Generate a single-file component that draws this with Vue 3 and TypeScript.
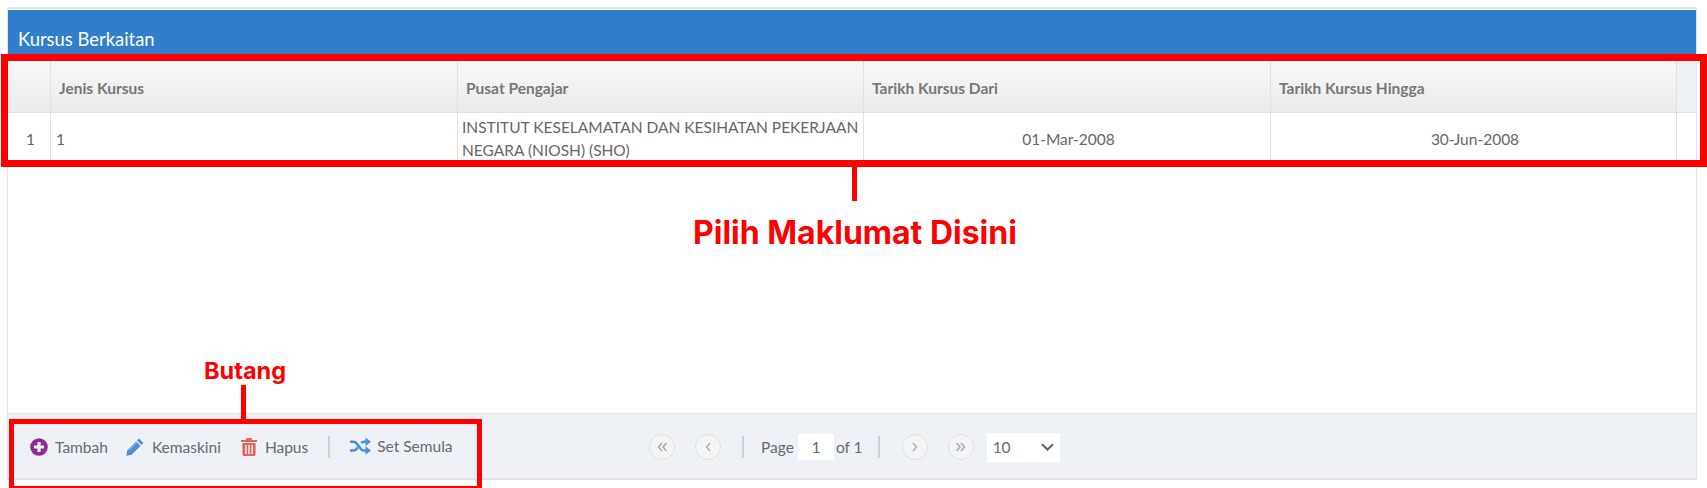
<script setup lang="ts">
interface Column { label: string; width: number }
const columns: Column[] = [
  { label: '', width: 43 },
  { label: 'Jenis Kursus', width: 407 },
  { label: 'Pusat Pengajar', width: 406 },
  { label: 'Tarikh Kursus Dari', width: 407 },
  { label: 'Tarikh Kursus Hingga', width: 406 },
]
</script>

<template>
  <div class="page">
    <section class="panel">
      <header class="title"><span>Kursus Berkaitan</span></header>
      <div class="thead">
        <div v-for="c in columns" :key="c.label" class="th" :style="{ width: c.width + 'px' }">{{ c.label }}</div>
      </div>
      <div class="row">
        <div class="td num" :style="{ width: columns[0].width + 'px' }">1</div>
        <div class="td" :style="{ width: columns[1].width + 'px' }">1</div>
        <div class="td wrap" :style="{ width: columns[2].width + 'px' }">INSTITUT KESELAMATAN DAN KESIHATAN PEKERJAAN NEGARA (NIOSH) (SHO)</div>
        <div class="td center" :style="{ width: columns[3].width + 'px' }">01-Mar-2008</div>
        <div class="td center" :style="{ width: columns[4].width + 'px' }">30-Jun-2008</div>
      </div>
      <div class="body"></div>
      <footer class="footer">
        <div class="actions">
          <a class="act tambah">
            <svg width="18" height="18" viewBox="0 0 18 18"><circle cx="9" cy="9" r="8.800" fill="#8e2a96"/><path d="M7.400 4h3.200v3.400H14v3.200h-3.400V14H7.400v-3.400H4V7.400h3.400z" fill="#eef1f6"/></svg>
            Tambah
          </a>
          <a class="act kemaskini">
            <svg width="18" height="18" viewBox="0 0 18 18"><path d="M13 .6 17.400 5 15.400 7 11 2.600zM10.100 3.500 14.500 7.900 5.600 16.800.3 17.700 1.200 12.400z" fill="#4a90d9"/><path d="M3.400 11.800 10.700 4.500" stroke="#a9cbed" stroke-width="1"/></svg>
            Kemaskini
          </a>
          <a class="act hapus">
            <svg width="16" height="18" viewBox="0 0 16 18"><path d="M5.600 0h4.800l1 2H16v2H0V2h4.600zM1.400 5h13.200v11.200c0 1-.8 1.800-1.800 1.800H3.200c-1 0-1.800-.8-1.800-1.800zM4.200 7v9h1.400V7zm3.100 0v9h1.400V7zm3.100 0v9h1.400V7z" fill="#e0675c" fill-rule="evenodd"/></svg>
            Hapus
          </a>
          <span class="sep"></span>
          <a class="act reset">
            <svg width="21" height="18" viewBox="0 0 21 18"><path d="M0 4.700h3.500c1.500 0 2.400.7 3.200 1.800l4.200 5.500c.8 1 1.600 1.500 2.900 1.500H16" fill="none" stroke="#4a90d9" stroke-width="2.600"/><path d="M0 13.500h3.500c1.500 0 2.400-.7 3.200-1.800l1-1.300M11.300 6.100c.7-.9 1.500-1.400 2.600-1.400H16" fill="none" stroke="#4a90d9" stroke-width="2.600"/><path d="M15.500.5 21 4.700 15.500 9zM15.500 9.300 21 13.500 15.500 17.700z" fill="#4a90d9"/></svg>
            Set Semula
          </a>
        </div>
        <div class="pager">
          <button class="circle"><svg width="11" height="10" viewBox="0 0 11 10"><path d="M5 1 1.500 5 5 9M9.500 1 6 5l3.500 4" fill="none" stroke="#aaa" stroke-width="1.500"/></svg></button>
          <button class="circle second"><svg width="6" height="10" viewBox="0 0 6 10"><path d="M5 1 1.500 5 5 9" fill="none" stroke="#aaa" stroke-width="1.300"/></svg></button>
          <span class="sep pager-sep"></span>
          <span class="page-label">Page</span>
          <span class="page-input">1</span>
          <span class="page-of">of 1</span>
          <span class="sep pager-sep2"></span>
          <button class="circle next"><svg width="6" height="10" viewBox="0 0 6 10"><path d="M1 1 4.500 5 1 9" fill="none" stroke="#aaa" stroke-width="1.300"/></svg></button>
          <button class="circle second"><svg width="11" height="10" viewBox="0 0 11 10"><path d="M1.500 1 5 5 1.500 9M6 1l3.500 4L6 9" fill="none" stroke="#aaa" stroke-width="1.500"/></svg></button>
          <div class="select">
            <span>10</span>
            <svg width="13" height="8" viewBox="0 0 13 8"><path d="M1 1.200 6.500 6.500 12 1.200" fill="none" stroke="#5b6673" stroke-width="2"/></svg>
          </div>
        </div>
      </footer>
    </section>

    <div class="mark mark-table"></div>
    <div class="tick tick-table"></div>
    <div class="note note-table">Pilih Maklumat Disini</div>
    <div class="mark mark-actions"></div>
    <div class="tick tick-actions"></div>
    <div class="note note-actions">Butang</div>
  </div>
</template>

<style>
html, body { margin: 0; background: #fff; }
</style>

<style scoped>
.page {
  position: relative;
  width: 1707px;
  height: 488px;
  overflow: hidden;
  background: #fff;
  font-family: Lato, "Open Sans", sans-serif;
  font-size: 15.5px;
  color: #676a6c;
  padding-top: 7px;
  box-sizing: border-box;
}
.panel {
  width: 1690px;
  height: 473px;
  margin-left: 7px;
  box-sizing: border-box;
  border: 1px solid #e3e3e3;
  border-top-width: 2px;
  border-radius: 3px 3px 0 0;
  padding-top: 1px;
  display: flex;
  flex-direction: column;
}
.title {
  height: 51px;
  flex: none;
  background: #317ecc;
  color: #fff;
  font-size: 18.4px;
  display: flex;
  align-items: flex-end;
  padding: 0 0 10px 10px;
  box-sizing: border-box;
  line-height: 24px;
}
.thead {
  flex: none;
  height: 52px;
  display: flex;
  background: #eef1f6;
  border-bottom: 1px solid #e1e1e1;
  box-sizing: border-box;
}
.th {
  flex: none;
  box-sizing: border-box;
  border-right: 1px solid #e1e1e1;
  background: linear-gradient(#f8f8f8, #ebebeb);
  font-weight: 700;
  color: #777;
  padding: 2px 0 0 8px;
  display: flex;
  align-items: center;
}
.row {
  flex: none;
  height: 47px;
  display: flex;
}
.td {
  flex: none;
  box-sizing: border-box;
  border-right: 1px solid #e1e1e1;
  padding: 4px 2px 0 5px;
  display: flex;
  align-items: center;
  color: #666;
}
.td.wrap { line-height: 23px; padding-top: 3px; align-items: flex-start; padding-left: 4px; }
.td.num { justify-content: center; padding-left: 3px; padding-right: 0; }
.td.center { justify-content: center; }
.body { flex: 1; border-bottom: 1px solid #e3e3e3; }
.footer {
  flex: none;
  height: 65px;
  background: #eef1f6;
  display: flex;
  align-items: center;
  padding-left: 22px;
  padding-bottom: 2px;
  box-sizing: border-box;
  border-bottom: 1px solid #e3e3e3;
}
.actions {
  display: flex;
  align-items: center;
  width: 619px;
  flex: none;
  padding-top: 4px;
}
.act {
  display: flex;
  align-items: center;
  gap: 7px;
  color: #626a73;
  margin-right: 18px;
}
.kemaskini { gap: 8px; margin-right: 20px; }
.hapus { margin-right: 20px; gap: 8px; }
.reset { gap: 6px; margin-top: -3px; margin-left: 20px; }
.sep {
  display: inline-block;
  width: 2px;
  height: 22px;
  background: #c8d1dc;
  flex: none;
}
.pager { display: flex; align-items: center; color: #626a73; padding-top: 4px; }
.circle {
  width: 26px;
  height: 26px;
  border-radius: 50%;
  border: 1px solid #e0e0e0;
  background: #f5f5f5;
  padding: 0;
  display: flex;
  align-items: center;
  justify-content: center;
  flex: none;
}
.second { margin-left: 20px; }
.pager-sep { margin: 0 17px 0 21px; }
.page-input {
  width: 36px;
  height: 26px;
  background: #fff;
  text-align: center;
  line-height: 26px;
  margin: 0 2px 0 4px;
}
.pager-sep2 { margin: 0 22px 0 15px; }
.select {
  width: 73px;
  height: 29px;
  margin-left: 13px;
  background: #fff;
  display: flex;
  align-items: center;
  justify-content: space-between;
  padding: 0 6px 0 6px;
  box-sizing: border-box;
  font-size: 15.5px;
}
.mark { position: absolute; box-sizing: border-box; border-style: solid; border-color: #f00; }
.mark-table { left: 1px; top: 54px; width: 1706px; height: 113px; border-width: 7px; }
.mark-actions { left: 9px; top: 419px; width: 473px; height: 72px; border-width: 5px; }
.tick { position: absolute; width: 5px; background: #f00; }
.tick-table { left: 852px; top: 167px; height: 34px; }
.tick-actions { left: 241px; top: 385px; height: 34px; }
.note {
  position: absolute;
  font-family: Inter, "Liberation Sans", sans-serif;
  font-weight: 700;
  color: #f00;
  white-space: nowrap;
}
.note-table { left: 693px; top: 214px; font-size: 32px; line-height: 38px; }
.note-actions { left: 204px; top: 357px; font-size: 23.5px; line-height: 28px; }
</style>
